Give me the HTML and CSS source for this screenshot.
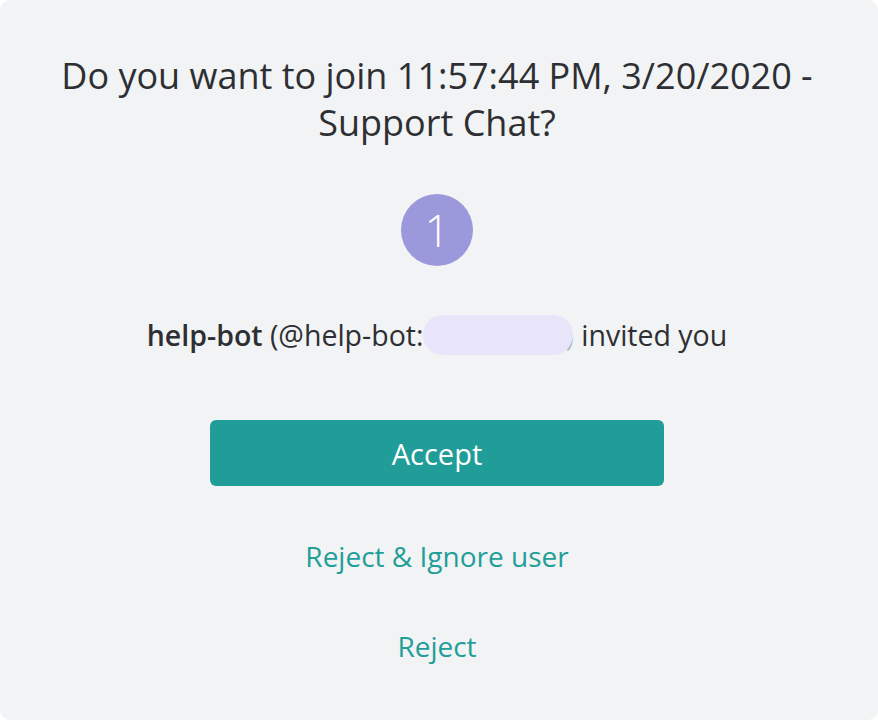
FILE: index.html
```html
<!DOCTYPE html>
<html>
<head>
<meta charset="utf-8">
<link rel="stylesheet" href="styles.css">
</head>
<body>
<div class="card">
  <h1 class="title">Do you want to join 11:57:44 PM, 3/20/2020 -<br>Support Chat?</h1>
  <div class="avatar">1</div>
  <p class="invite"><b>help-bot</b>&nbsp;(@help-bot:<span class="redact"></span><span class="paren">)</span>&nbsp;invited you</p>
  <button class="accept">Accept</button>
  <a class="link first">Reject &amp; Ignore user</a>
  <a class="link">Reject</a>
</div>
</body>
</html>
```
FILE: styles.css
```css
html, body {
  margin: 0;
  padding: 0;
  background: #ffffff;
}
body {
  font-family: "Open Sans", "Noto Sans", sans-serif;
  color: #2e2f32;
}
.card {
  width: 878px;
  height: 720px;
  box-sizing: border-box;
  background: #f2f3f5;
  border-radius: 10px;
  display: flex;
  flex-direction: column;
  align-items: center;
  padding: 52px 4px 0 0;
}
.title {
  margin: 0;
  font-size: 36px;
  font-weight: 400;
  line-height: 47px;
  text-align: center;
  white-space: nowrap;
}
.avatar {
  margin-top: 48px;
  width: 72px;
  height: 72px;
  border-radius: 50%;
  background: #9b99db;
  color: #ffffff;
  font-size: 44px;
  line-height: 72px;
  text-align: center;
  font-weight: 300;
}
.invite {
  margin: 49px 0 0;
  font-size: 28.5px;
  line-height: 40px;
  display: flex;
  align-items: center;
  white-space: nowrap;
}
.invite b {
  font-weight: 600;
}
.redact {
  position: relative;
  z-index: 1;
  display: inline-block;
  width: 150px;
  height: 40px;
  border-radius: 20px;
  background: #e8e5fb;
}
.paren {
  color: #b5b5be;
  margin-left: -8px;
}
.accept {
  margin-top: 65px;
  width: 454px;
  height: 66px;
  border: none;
  border-radius: 6px;
  background: #219d99;
  color: #ffffff;
  font-family: inherit;
  font-size: 29px;
}
.link {
  color: #1f9f98;
  font-size: 28px;
  line-height: 40px;
  margin-top: 50px;
}
.link.first {
  margin-top: 50px;
}
```
